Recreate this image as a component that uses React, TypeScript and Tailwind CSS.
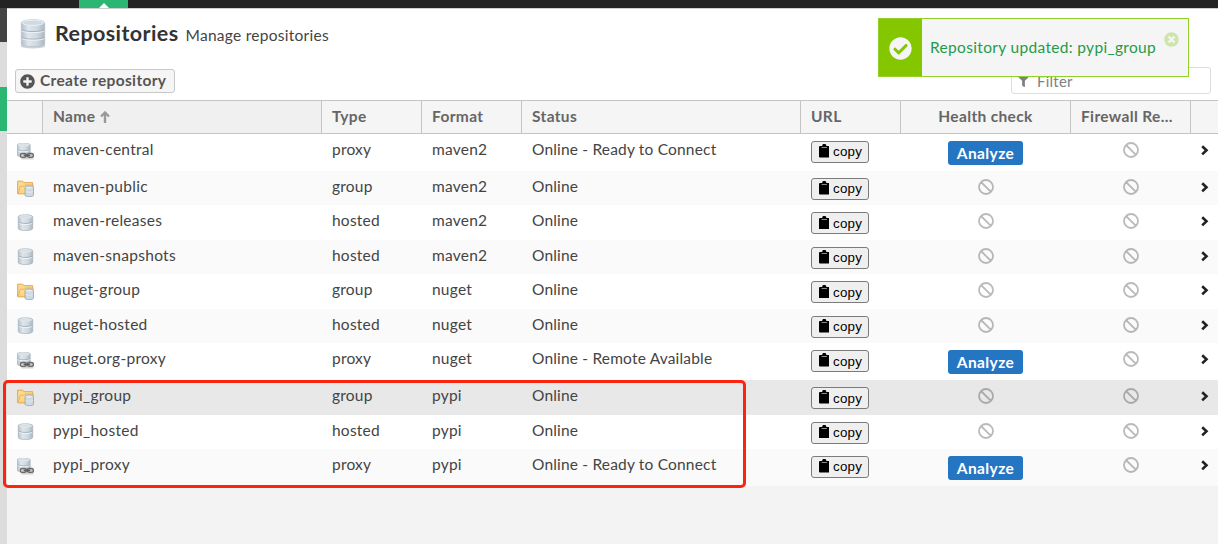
import React from 'react';
import { FaCheckCircle, FaTimesCircle, FaPlusCircle, FaFilter } from 'react-icons/fa';

type Kind = 'proxy' | 'group' | 'hosted';
interface Repo {
  name: string;
  kind: Kind;
  format: string;
  status: string;
  analyze?: boolean;
  selected?: boolean;
}

const repos: Repo[] = [
  { name: 'maven-central', kind: 'proxy', format: 'maven2', status: 'Online - Ready to Connect', analyze: true },
  { name: 'maven-public', kind: 'group', format: 'maven2', status: 'Online' },
  { name: 'maven-releases', kind: 'hosted', format: 'maven2', status: 'Online' },
  { name: 'maven-snapshots', kind: 'hosted', format: 'maven2', status: 'Online' },
  { name: 'nuget-group', kind: 'group', format: 'nuget', status: 'Online' },
  { name: 'nuget-hosted', kind: 'hosted', format: 'nuget', status: 'Online' },
  { name: 'nuget.org-proxy', kind: 'proxy', format: 'nuget', status: 'Online - Remote Available', analyze: true },
  { name: 'pypi_group', kind: 'group', format: 'pypi', status: 'Online', selected: true },
  { name: 'pypi_hosted', kind: 'hosted', format: 'pypi', status: 'Online' },
  { name: 'pypi_proxy', kind: 'proxy', format: 'pypi', status: 'Online - Ready to Connect', analyze: true },
];

const COLS = 'grid grid-cols-[36px_279px_100px_100px_279px_100px_170px_120px_27px]';

function Gradients() {
  return (
    <svg className="absolute h-0 w-0" aria-hidden="true">
      <defs>
        <linearGradient id="metal" x1="0" x2="1" y1="0" y2="0">
          <stop offset="0" stopColor="#b3bfc9" />
          <stop offset="0.3" stopColor="#dfe6ec" />
          <stop offset="0.65" stopColor="#cfd9e1" />
          <stop offset="1" stopColor="#aab7c2" />
        </linearGradient>
        <linearGradient id="folder" x1="0" x2="0" y1="0" y2="1">
          <stop offset="0" stopColor="#fde09a" />
          <stop offset="1" stopColor="#fbd27c" />
        </linearGradient>
      </defs>
    </svg>
  );
}

function LargeDatabase() {
  return (
    <svg className="h-8 w-8 shrink-0" viewBox="0 0 32 32">
      <ellipse cx="16" cy="27.900" rx="12.300" ry="2.600" fill="#8d8d8d" opacity="0.400" />
      <path d="M4.300 5C4.300 .5 27.700 .5 27.700 5V26c0 3.400-23.400 3.400-23.400 0Z" fill="url(#metal)" stroke="#b3bdc6" strokeWidth="0.700" />
      <ellipse cx="16" cy="4.800" rx="10.800" ry="2.600" fill="#cfd9e0" stroke="#eef3f6" strokeWidth="0.900" />
      <path d="M4.600 11.800c2 2.300 20.800 2.300 22.800 0M4.600 19.400c2 2.300 20.800 2.300 22.800 0" fill="none" stroke="#a0adb8" strokeWidth="0.900" />
      <path d="M4.800 12.900c2 2.300 20.400 2.300 22.400 0M4.800 20.500c2 2.300 20.400 2.300 22.400 0" fill="none" stroke="#eef3f6" strokeWidth="1" />
    </svg>
  );
}

function Cylinder() {
  return (
    <>
      <path d="M1.200 2.600C1.200 .1 14.800 .1 14.800 2.600v11c0 2.600-13.600 2.600-13.600 0Z" fill="url(#metal)" stroke="#a8b5c0" strokeWidth="0.700" />
      <ellipse cx="8" cy="2.700" rx="5.900" ry="1.300" fill="#d6dfe6" stroke="#eaf0f4" strokeWidth="0.500" />
      <path d="M1.600 7.600c1.200 1.700 11.600 1.700 12.800 0" fill="none" stroke="#98a7b3" strokeWidth="0.800" />
      <path d="M1.800 8.600c1.200 1.700 11.200 1.700 12.400 0" fill="none" stroke="#f3f7f9" strokeWidth="0.800" />
    </>
  );
}

function RepoIcon({ kind }: { kind: Kind }) {
  if (kind === 'hosted') {
    return (
      <svg className="h-[17px] w-[17px]" viewBox="0 0 16 16">
        <Cylinder />
      </svg>
    );
  }
  if (kind === 'proxy') {
    return (
      <svg className="h-[17px] w-[17px]" viewBox="0 0 16 16">
        <g transform="translate(-.9 -.5) scale(.9 .88)">
          <Cylinder />
        </g>
        <rect x="3.200" y="9.900" width="5.600" height="3.600" rx="1.500" fill="#d0d0d0" stroke="#6b6b6b" strokeWidth="1.300" />
        <rect x="9.800" y="9.900" width="5.600" height="3.600" rx="1.500" fill="#c4c4c4" stroke="#6b6b6b" strokeWidth="1.300" />
        <path d="M6.300 11.700h6" stroke="#5c5c5c" strokeWidth="1.700" />
        <path d="M4 14.900h11.500" stroke="#777" strokeOpacity="0.450" strokeWidth="1" />
      </svg>
    );
  }
  return (
    <svg className="h-[17px] w-[17px]" viewBox="0 0 16 16">
      <path d="M.6 12.900V1.100h4.800l1 1.400h8.300v10.400Z" fill="#fbd98f" stroke="#e3a54b" strokeWidth="0.900" />
      <path d="M1 12.900 3 5.900h3.600l1-1.200h7.700l-1.600 8.200Z" fill="url(#folder)" stroke="#e8ad55" strokeWidth="0.800" />
      <g transform="translate(6.900 5.100) scale(.58 .68)">
        <path d="M1.200 2.600C1.200 .1 14.800 .1 14.800 2.600v11c0 2.600-13.600 2.600-13.600 0Z" fill="#cfdae3" stroke="#93a3b0" strokeWidth="1.200" />
        <ellipse cx="8" cy="3" rx="5.500" ry="1.300" fill="#e6edf2" />
        <path d="M2 8.300c1.200 1.500 10.800 1.500 12 0" fill="none" stroke="#e8eff4" strokeWidth="1" />
      </g>
    </svg>
  );
}

function Ban() {
  return (
    <svg className="mt-[8px] mr-px h-4 w-4" viewBox="0 0 16 16" fill="none" stroke="#000" strokeOpacity="0.270" strokeWidth="1.800">
      <path d="M3.050 3.050A7 7 0 1 1 12.950 12.950A7 7 0 0 1 3.050 3.050L12.950 12.950" />
    </svg>
  );
}

function CopyButton() {
  return (
    <button className="mt-[7px] flex h-[22px] w-[58px] items-center rounded-[3px] border border-[#7b7b7b] bg-[#efefef] pl-[6.500px] font-['Liberation_Sans',Arial,sans-serif] text-[13.333px] leading-none text-black">
      <svg className="mr-[4px] mb-[2px] h-[13.500px] w-[10.500px] shrink-0" viewBox="0 0 11 14" preserveAspectRatio="none">
        <path d="M1 2h2.300a2.200 2.200 0 0 1 4.400 0H10a1 1 0 0 1 1 1v10a1 1 0 0 1-1 1H1a1 1 0 0 1-1-1V3a1 1 0 0 1 1-1Z" fill="#000" />
        <path d="M2.700 3.600h5.600" stroke="#bbb" strokeWidth="0.800" />
      </svg>
      <span>copy</span>
    </button>
  );
}

function RepoRow({ repo, index }: { repo: Repo; index: number }) {
  const bg = repo.selected ? 'bg-[#e8e8e8]' : index % 2 ? 'bg-[#fafafa]' : 'bg-white';
  const height = repo.analyze ? 'h-[37px]' : 'h-[34.450px]';
  return (
    <div className={`${COLS} ${bg} ${height} text-[15.500px] leading-[31.200px] tracking-[0.220px] text-[#444]`}>
      <div className="pl-[10px] pt-[8.500px]"><RepoIcon kind={repo.kind} /></div>
      <div className="pl-[10px] tracking-[0.280px]">{repo.name}</div>
      <div className="pl-[10px]">{repo.kind}</div>
      <div className="pl-[10px]">{repo.format}</div>
      <div className="pl-[10px] tracking-[0.180px]">{repo.status}</div>
      <div className="pl-[10px]"><CopyButton /></div>
      <div className="flex items-start justify-center">
        {repo.analyze ? (
          <button className="mt-[7px] mr-px h-6 w-[75px] rounded-[3px] bg-[#2476c3] text-[15.500px] leading-[23px] font-bold tracking-[0.400px] text-white">Analyze</button>
        ) : (
          <Ban />
        )}
      </div>
      <div className="flex items-start justify-center"><Ban /></div>
      <div className="pl-[10px] pt-[11px]">
        <svg className="h-[11px] w-2" viewBox="0 0 8 11" fill="none" stroke="#222" strokeWidth="2.600">
          <path d="M1.200 1.200 5.500 5.300 1.200 9.400" />
        </svg>
      </div>
    </div>
  );
}

const HEADERS = ['', 'Name', 'Type', 'Format', 'Status', 'URL', 'Health check', 'Firewall Re...', ''];

export default function App() {
  return (
    <div className="relative flex h-[544px] w-[1218px] flex-col overflow-hidden bg-[#f3f3f3] font-[Lato,sans-serif]">
      <Gradients />
      <div className="flex h-2 shrink-0 bg-[#222] pl-[79px]">
        <div className="flex h-2 w-[49px] justify-center bg-[#2bb673]">
          <svg className="mt-[3px] h-[5px] w-[10px]" viewBox="0 0 10 5"><path d="M0 5 5 0l5 5Z" fill="#fff" /></svg>
        </div>
      </div>
      <div className="flex flex-1">
        <div className="flex w-[7px] shrink-0 flex-col bg-[#dcdcdc]">
          <div className="h-[34px] bg-[#444]" />
          <div className="mt-[45px] h-11 bg-[#2bb673]" />
        </div>
        <main className="flex flex-1 flex-col">
          <header className="flex h-[92px] flex-col border-t border-[#ccc] bg-white">
            <div className="flex h-[52px] items-start pt-[9px] pl-[10px]">
              <LargeDatabase />
              <h1 className="ml-[6px] text-[21.500px] leading-[30px] font-bold tracking-[0.400px] text-[#333]">Repositories</h1>
              <p className="ml-[7px] text-[15.500px] leading-[34px] tracking-[0.270px] text-[#444]">Manage repositories</p>
            </div>
            <div className="flex justify-between pr-[7px] pl-2">
              <button className="mt-2 flex h-6 w-40 items-center rounded-[3px] border border-[#c8c8c8] bg-[#f5f5f5] pl-1 text-[15.500px] font-bold tracking-[0.350px] text-[#555]">
                <FaPlusCircle className="mr-[5px] h-[15px] w-[15px] shrink-0" />
                <span className="pb-px whitespace-nowrap">Create repository</span>
              </button>
              <div className="mt-[6px] flex h-[27px] w-[200px] items-center rounded-[3px] border border-[#ddd] bg-white pl-[6px] text-[15px] tracking-[0.250px] text-[#808080]">
                <FaFilter className="mt-[2px] mr-2 h-[13px] w-[11px]" />
                <span className="pt-px">Filter</span>
              </div>
            </div>
          </header>
          <div className={`${COLS} h-[34px] border-y border-[#c4c4c4] bg-[#f5f5f5] text-[15.500px] leading-[30px] font-bold tracking-[0.350px] text-[#666]`}>
            {HEADERS.map((label, i) => (
              <div
                key={i}
                className={`flex items-start whitespace-nowrap ${i < 8 ? 'border-r border-[#c4c4c4]' : ''} ${i === 1 ? 'bg-[#f0f0f0]' : ''} ${i === 6 ? 'justify-center' : 'pl-[10px]'}`}
              >
                {label}
                {i === 1 && (
                  <svg className="mt-[10px] ml-[5px] h-3 w-[10px]" viewBox="0 0 10 12" fill="none" stroke="#999" strokeWidth="2.400">
                    <path d="M5 12V2M1 5.500 5 1.500l4 4" />
                  </svg>
                )}
              </div>
            ))}
          </div>
          {repos.map((repo, i) => (
            <RepoRow key={repo.name} repo={repo} index={i} />
          ))}
        </main>
      </div>
      <div className="absolute top-[380px] left-[3px] h-[108px] w-[743px] rounded-[5px] border-[3px] border-[#fb2410]" />
      <div className="absolute top-[18px] left-[878px] flex h-[59px] w-[311px] border border-[#91d22a] bg-[#f5f5f5]">
        <div className="flex w-[43px] items-center justify-center bg-[#84c700]">
          <FaCheckCircle className="mt-[2px] h-[23px] w-[23px] text-[#f5f5f5]" />
        </div>
        <div className="flex items-center pl-2 text-[15.500px] tracking-[0.330px] whitespace-nowrap text-[#1f9b4b]">Repository updated: pypi_group</div>
        <FaTimesCircle className="absolute top-[13px] right-[9px] h-[15px] w-[15px] text-[#cde5ac]" />
      </div>
    </div>
  );
}
